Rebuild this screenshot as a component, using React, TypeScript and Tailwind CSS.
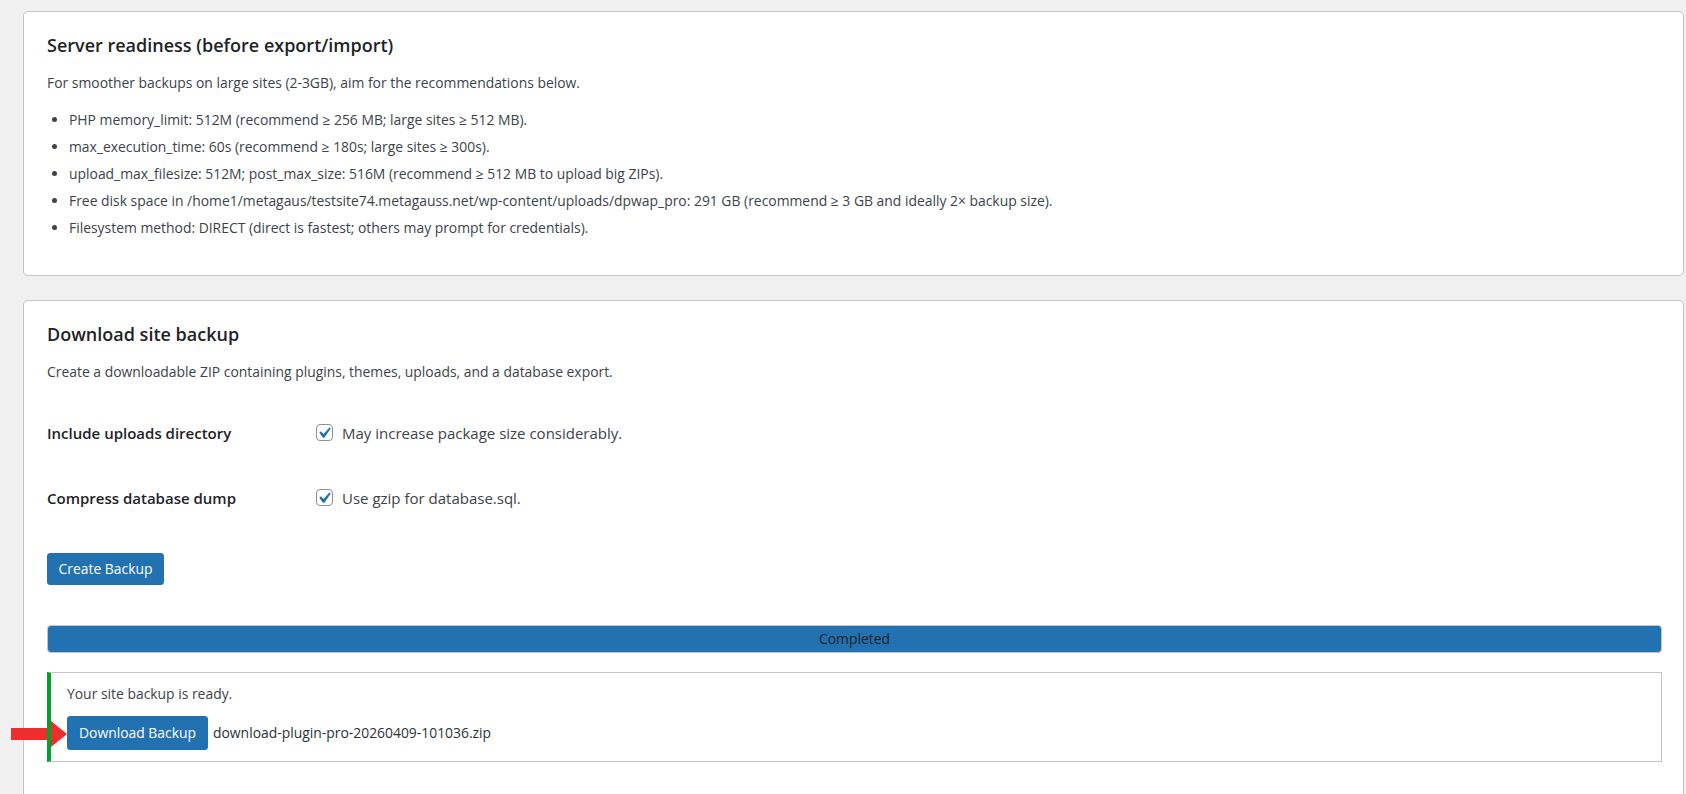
import type { ReactNode } from 'react'

const checks = [
  'PHP memory_limit: 512M (recommend ≥ 256 MB; large sites ≥ 512 MB).',
  'max_execution_time: 60s (recommend ≥ 180s; large sites ≥ 300s).',
  'upload_max_filesize: 512M; post_max_size: 516M (recommend ≥ 512 MB to upload big ZIPs).',
  'Free disk space in /home1/metagaus/testsite74.metagauss.net/wp-content/uploads/dpwap_pro: 291 GB (recommend ≥ 3 GB and ideally 2× backup size).',
  'Filesystem method: DIRECT (direct is fastest; others may prompt for credentials).',
]

function Card({ children, className = '' }: { children: ReactNode; className?: string }) {
  return (
    <section
      className={`rounded-[5px] border border-[#c3c4c7] bg-white pl-[23px] pr-[21px] pt-[21px] ${className}`}
    >
      {children}
    </section>
  )
}

function Checkbox() {
  return (
    <span className="relative inline-block h-[17px] w-[17px] shrink-0 rounded-[4px] border border-[#8c8f94] bg-white">
      <svg viewBox="0 0 20 20" className="absolute left-[-4px] top-[-3px] h-[22px] w-[22px]">
        <path d="M14.83 4.89l1.34.94-5.81 8.38H9.02L5.78 9.67l1.34-1.25 2.57 2.4z" fill="#2271b1" />
      </svg>
    </span>
  )
}

function OptionRow({ label, hint }: { label: string; hint: string }) {
  return (
    <div className="flex h-[65px] items-center text-[15px]">
      <div className="w-[269px] shrink-0 font-semibold text-[#1d2327]">{label}</div>
      <label className="flex items-center gap-[9px]">
        <Checkbox />
        <span>{hint}</span>
      </label>
    </div>
  )
}

export default function App() {
  return (
    <div className="min-h-[794px] overflow-hidden bg-[#f0f0f1] pl-[23px] pr-[2px] pt-[11px] font-['Open_Sans',sans-serif] text-[13.9px] leading-[20px] text-[#3c434a]">
      {/* Server readiness */}
      <Card className="pb-[37px]">
        <h2 className="text-[18px] font-semibold leading-[24px] text-[#1d2327]">
          Server readiness (before export/import)
        </h2>
        <p className="mt-[16px]">
          For smoother backups on large sites (2-3GB), aim for the recommendations below.
        </p>
        <ul className="mt-[17px] list-disc space-y-[7px] pl-[22px] marker:text-[#3c434a]">
          {checks.map((item) => (
            <li key={item}>{item}</li>
          ))}
        </ul>
      </Card>

      {/* Download site backup */}
      <Card className="mt-[24px] pb-[60px]">
        <h2 className="text-[18px] font-semibold leading-[24px] text-[#1d2327]">
          Download site backup
        </h2>
        <p className="mt-[16px]">
          Create a downloadable ZIP containing plugins, themes, uploads, and a database export.
        </p>

        <div className="mt-[18px]">
          <OptionRow label="Include uploads directory" hint="May increase package size considerably." />
          <OptionRow label="Compress database dump" hint="Use gzip for database.sql." />
        </div>

        <button
          type="button"
          className="mt-[23px] flex h-[32px] w-[117px] items-center justify-center rounded-[3px] border border-[#2271b1] bg-[#2271b1] text-white"
        >
          Create Backup
        </button>

        <div className="mt-[40px] flex h-[28px] items-center justify-center rounded-[4px] border border-[#c3c4c7] bg-[#2271b1] text-[#1d2327]">
          Completed
        </div>

        <div className="mt-[19px] border border-l-4 border-[#c3c4c7] border-l-[#00a32a] bg-white pb-[11px] pl-[16px] pt-[11px]">
          <p>Your site backup is ready.</p>
          <div className="relative mt-[12px] flex items-center">
            {/* red pointer arrow */}
            <svg
              viewBox="0 0 56 26"
              className="absolute left-[-56px] top-[5px] z-10 h-[26px] w-[56px]"
            >
              <rect x="0" y="7" width="36" height="12" fill="#ee2d2d" />
              <polygon points="40,0 56,13 40,26" fill="#ee2d2d" />
            </svg>
            <button
              type="button"
              className="flex h-[34px] w-[141px] items-center justify-center rounded-[3px] border border-[#2271b1] bg-[#2271b1] text-white"
            >
              Download Backup
            </button>
            <span className="ml-[5px] text-[#2c3338]">download-plugin-pro-20260409-101036.zip</span>
          </div>
        </div>
      </Card>
    </div>
  )
}
